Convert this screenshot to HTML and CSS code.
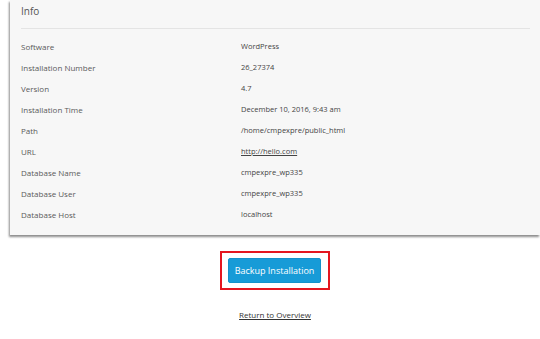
FILE: index.html
```html
<!DOCTYPE html>
<html lang="en">
<head>
    <meta charset="UTF-8">
    <meta name="viewport" content="width=device-width, initial-scale=1.0">
    <title>Installation Info</title>
    <link rel="stylesheet" href="styles.css">
</head>
<body>
    <div class="panel">
        <div class="panel-heading">Info</div>
        <div class="info-table">
            <div class="info-row"><span class="info-label">Software</span><span class="info-value">WordPress</span></div>
            <div class="info-row"><span class="info-label">Installation Number</span><span class="info-value">26_27374</span></div>
            <div class="info-row"><span class="info-label">Version</span><span class="info-value">4.7</span></div>
            <div class="info-row"><span class="info-label">Installation Time</span><span class="info-value">December 10, 2016, 9:43 am</span></div>
            <div class="info-row"><span class="info-label">Path</span><span class="info-value">/home/cmpexpre/public_html</span></div>
            <div class="info-row"><span class="info-label">URL</span><span class="info-value"><a href="#">http://hello.com</a></span></div>
            <div class="info-row"><span class="info-label">Database Name</span><span class="info-value">cmpexpre_wp335</span></div>
            <div class="info-row"><span class="info-label">Database User</span><span class="info-value">cmpexpre_wp335</span></div>
            <div class="info-row"><span class="info-label">Database Host</span><span class="info-value">localhost</span></div>
        </div>
    </div>

    <div class="actions">
        <div class="highlight">
            <button class="btn-primary">Backup Installation</button>
        </div>
        <a class="back-link" href="#">Return to Overview</a>
    </div>
</body>
</html>
```

FILE: styles.css
```css
body {
    font-family: 'Open Sans', 'Noto Sans', sans-serif;
    background-color: #ffffff;
    color: #333333;
    margin: 0;
}

.panel {
    margin-left: 10px;
    background-color: #f7f7f7;
    padding: 0 10px 10px 11px;
    box-shadow: -1px 2px 2px rgba(0, 0, 0, 0.45);
}

.panel-heading {
    font-size: 10px;
    line-height: 16px;
    color: #555555;
    padding: 3px 0 9px;
    border-bottom: 1px solid #e4e4e4;
}

.info-table {
    margin-top: 7px;
}

.info-row {
    display: grid;
    grid-template-columns: 220px 1fr;
    font-size: 8px;
    line-height: 21px;
}

.info-label {
    color: #5a5a5a;
}

.info-value {
    color: #444444;
    font-size: 7.5px;
}

.info-value a {
    color: #444444;
}

.actions {
    margin-left: 10px;
    display: flex;
    flex-direction: column;
    align-items: center;
    padding-top: 16px;
}

.highlight {
    border: 2px solid #e4161f;
    padding: 5px 7px 5px 6px;
}

.btn-primary {
    display: block;
    font-family: 'Open Sans', 'Noto Sans', sans-serif;
    font-size: 9px;
    color: #ffffff;
    background-color: #179bd7;
    border: 1px solid #1491c9;
    border-radius: 2px;
    width: 93px;
    height: 25px;
    padding: 0;
}

.back-link {
    margin-top: 19px;
    font-size: 8px;
    color: #333333;
}
```
